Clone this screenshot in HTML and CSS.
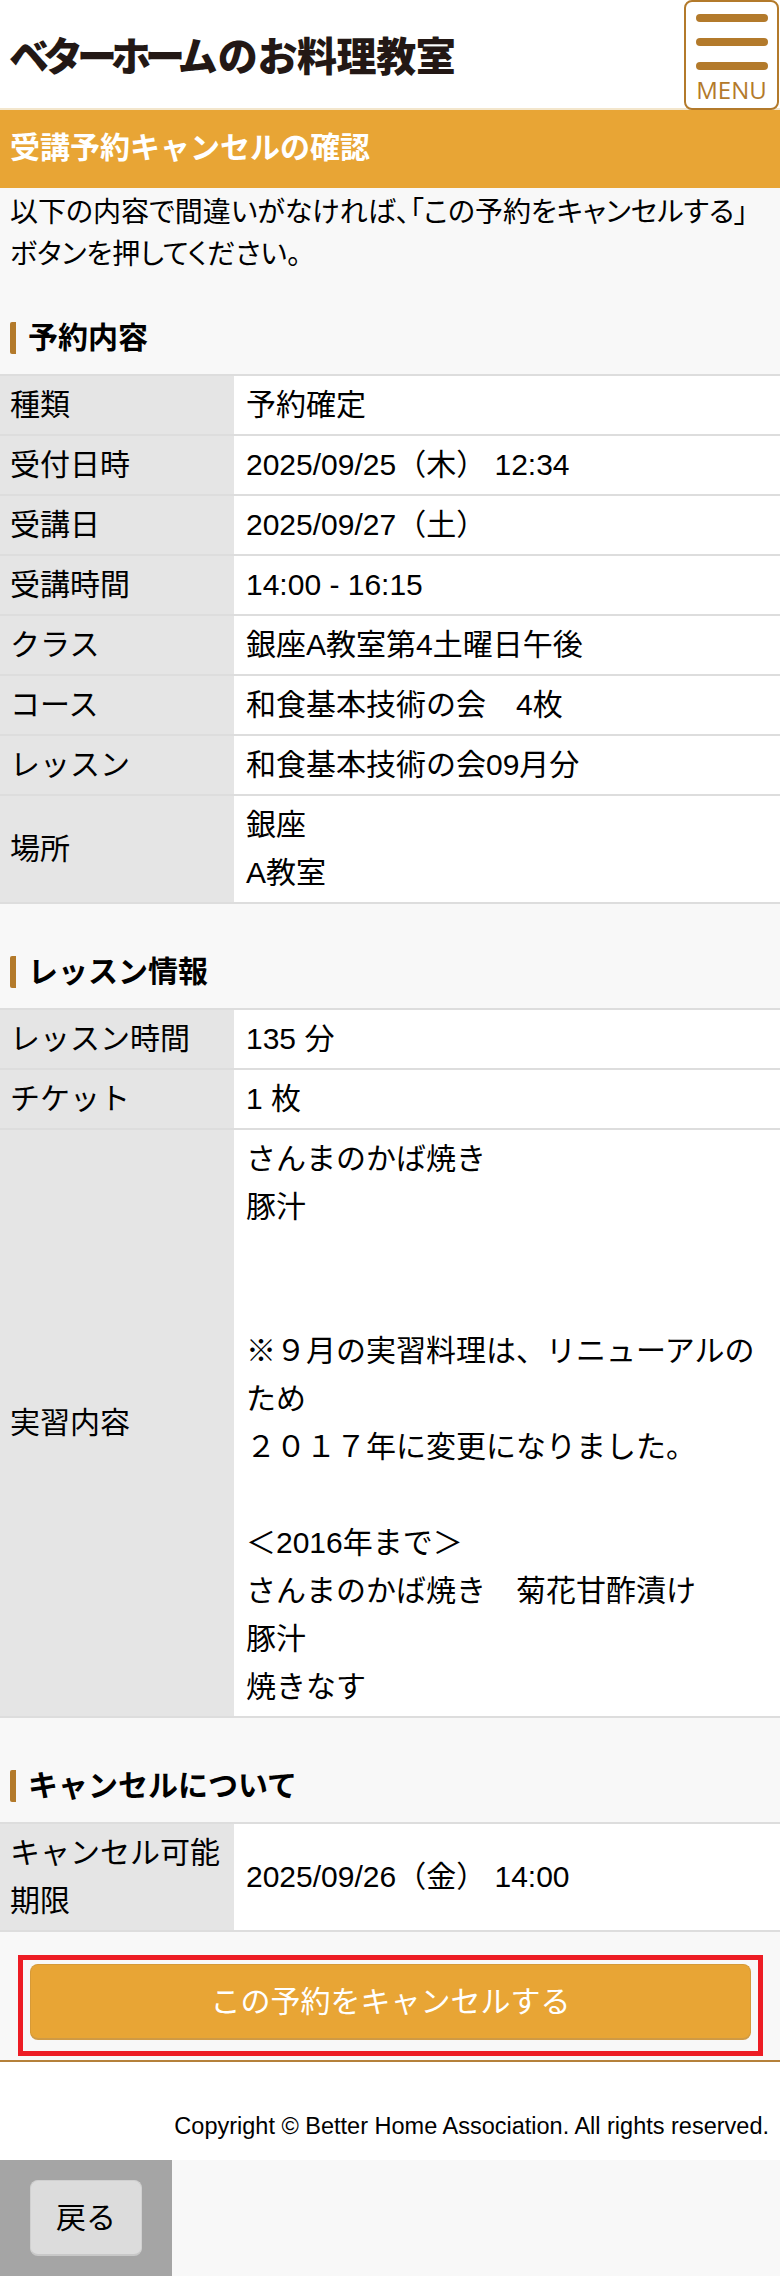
FILE: index.html
```html
<!DOCTYPE html>
<html lang="ja">
<head>
<meta charset="utf-8">
<title>受講予約キャンセルの確認</title>
<link rel="stylesheet" href="styles.css">
</head>
<body>
<header class="site-header">
  <div class="logo"><span class="logo-brand">ベターホーム</span><span class="logo-rest">のお料理教室</span></div>
  <div class="menu-btn">
    <span class="menu-bar"></span>
    <span class="menu-bar"></span>
    <span class="menu-bar"></span>
    <span class="menu-label">MENU</span>
  </div>
</header>
<h1 class="banner">受講予約キャンセルの確認</h1>
<p class="intro">以下の内容で間違いがなければ、「この予約をキャンセルする」ボタンを押してください。</p>

<h2 class="section-title">予約内容</h2>
<table class="info">
  <tr><th>種類</th><td>予約確定</td></tr>
  <tr><th>受付日時</th><td>2025/09/25（木） 12:34</td></tr>
  <tr><th>受講日</th><td>2025/09/27（土）</td></tr>
  <tr><th>受講時間</th><td>14:00 - 16:15</td></tr>
  <tr><th>クラス</th><td>銀座A教室第4土曜日午後</td></tr>
  <tr><th>コース</th><td>和食基本技術の会　4枚</td></tr>
  <tr><th>レッスン</th><td>和食基本技術の会09月分</td></tr>
  <tr><th>場所</th><td>銀座<br>A教室</td></tr>
</table>

<h2 class="section-title">レッスン情報</h2>
<table class="info">
  <tr><th>レッスン時間</th><td>135 分</td></tr>
  <tr><th>チケット</th><td>1 枚</td></tr>
  <tr><th>実習内容</th><td>さんまのかば焼き<br>豚汁<br><br><br>※９月の実習料理は、リニューアルのため<br>２０１７年に変更になりました。<br><br>＜2016年まで＞<br>さんまのかば焼き　菊花甘酢漬け<br>豚汁<br>焼きなす</td></tr>
</table>

<h2 class="section-title">キャンセルについて</h2>
<table class="info">
  <tr><th>キャンセル可能期限</th><td>2025/09/26（金） 14:00</td></tr>
</table>

<div class="action-frame">
  <button class="btn btn-primary" type="button">この予約をキャンセルする</button>
</div>

<footer class="copyright">Copyright © Better Home Association. All rights reserved.</footer>

<nav class="bottom-bar">
  <div class="back-cell"><button class="btn btn-back" type="button">戻る</button></div>
</nav>
</body>
</html>
```
FILE: styles.css
```css
* { box-sizing: border-box; }

html, body { margin: 0; padding: 0; }

body {
  background: #f8f8f8;
  color: #000;
  font-family: "Liberation Sans", "Noto Sans CJK JP", sans-serif;
  font-size: 30px;
  line-height: 48px;
}

.site-header {
  height: 110px;
  background: #fff;
  border-bottom: 2px solid #f3e6cc;
  display: flex;
  align-items: flex-start;
  justify-content: space-between;
  padding-right: 1px;
}

.logo {
  display: flex;
  align-items: center;
  height: 108px;
  padding-left: 9px;
  font-family: "Noto Sans CJK JP", sans-serif;
  font-weight: 900;
  color: #231815;
  font-size: 40px;
  line-height: 40px;
  white-space: nowrap;
}

.logo-brand { letter-spacing: -6px; margin-right: 6px; }

.logo-rest { letter-spacing: -0.4px; }

.menu-btn {
  width: 95px;
  height: 110px;
  background: #fff;
  border: 2px solid #b37a2b;
  border-radius: 8px;
  padding: 12px 10px 0;
  display: flex;
  flex-direction: column;
  gap: 16px;
  position: relative;
}

.menu-bar {
  display: block;
  width: 72px;
  height: 8px;
  border-radius: 4px;
  background: #b37a2b;
  flex: none;
}

.menu-label {
  position: absolute;
  left: 0;
  right: 0;
  top: 72px;
  text-align: center;
  font-family: "Open Sans", sans-serif;
  font-size: 24px;
  line-height: 32px;
  color: #b37a2b;
}

.banner {
  margin: 0;
  height: 78px;
  padding: 0 10px;
  background: #e8a535;
  color: #fff;
  font-size: 30px;
  font-weight: 700;
  line-height: 76px;
}

.intro {
  margin: 0;
  padding: 4px 10px 0;
  font-size: 28px;
  line-height: 42px;
  font-feature-settings: "palt";
  min-height: 88px;
}

.section-title {
  margin: 46px 0 20px 10px;
  padding-left: 12px;
  border-left: 6px solid #b37a2b;
  border-radius: 2px;
  font-size: 30px;
  font-weight: 700;
  line-height: 32px;
}

.section-title + .info { margin-bottom: 0; }

.info + .section-title { margin-top: 52px; }

.info {
  width: 100%;
  table-layout: fixed;
  border-collapse: separate;
  border-spacing: 0;
  border-top: 2px solid #ddd;
}

.info th, .info td {
  padding: 5px 10px;
  border-bottom: 2px solid #ddd;
  font-weight: 400;
  text-align: left;
  vertical-align: middle;
}

.info th {
  width: 234px;
  background: #e5e5e5;
}

.info td {
  background: #fff;
  padding-left: 12px;
  padding-right: 12px;
}

.btn {
  display: block;
  font-family: inherit;
  font-size: 30px;
  line-height: 48px;
  border-radius: 8px;
  height: 76px;
  padding: 0;
  cursor: pointer;
}

.action-frame {
  margin: 23px 17px 4px 18px;
  padding: 4px 7px;
  border: 5px solid #ed1c24;
  height: 101px;
}

.btn-primary {
  width: 100%;
  background: #e8a535;
  color: #fff;
  border: 1px solid #d69a38;
  border-bottom: 2px solid #cf9a45;
}

.copyright {
  background: #fff;
  border-top: 2px solid #b5813a;
  height: 100px;
  padding: 46px 11px 0 0;
  text-align: right;
  font-size: 23.5px;
  line-height: 36px;
}

.bottom-bar {
  height: 116px;
  display: flex;
}

.back-cell {
  width: 172px;
  background: #a5a5a5;
  padding: 20px 30px;
}

.btn-back {
  width: 112px;
  background: #dcdcdc;
  color: #000;
  border: 1px solid #d0d0d0;
  border-bottom: 2px solid #c8c8c8;
}
```
